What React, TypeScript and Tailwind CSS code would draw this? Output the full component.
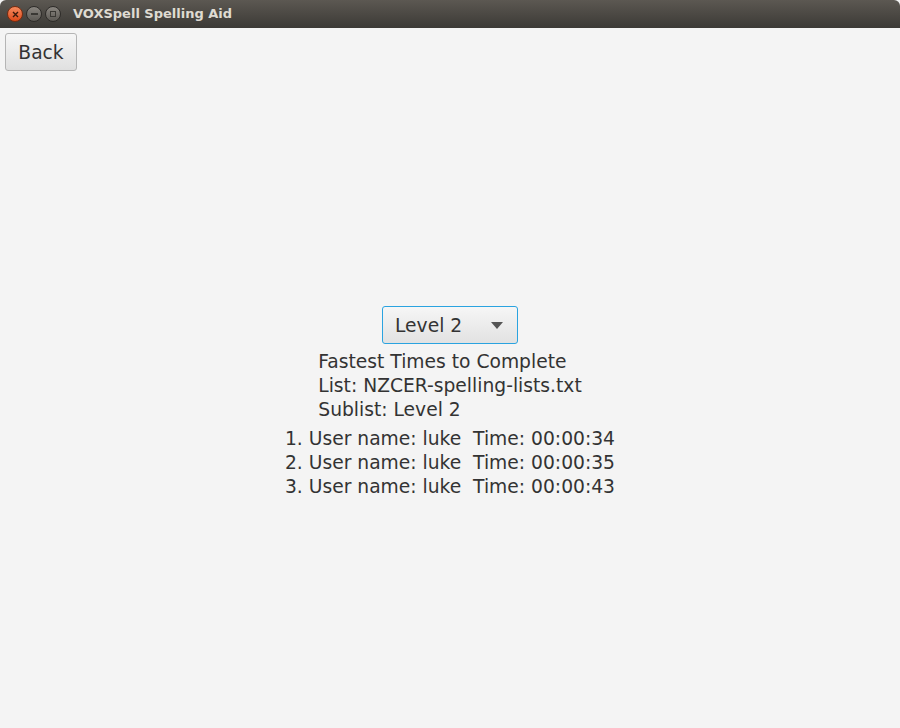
import React from "react";

export default function App() {
  const font = { fontFamily: '"DejaVu Sans", sans-serif' };
  return (
    <div className="w-[900px] h-[728px] bg-[#f4f4f4] flex flex-col overflow-hidden" style={font}>
      <div className="h-[28px] shrink-0 flex items-center bg-gradient-to-b from-[#5c5852] to-[#3c3a36] rounded-t-[6px]">
        <div className="flex items-center gap-[3px] pl-[7px]">
          <div className="w-[16px] h-[16px] rounded-full bg-gradient-to-b from-[#f58a5d] to-[#dd4814] border border-[#7a2c10] flex items-center justify-center">
            <svg width="7" height="7" viewBox="0 0 7 7"><path d="M1 1L6 6M6 1L1 6" stroke="#3a1a0c" strokeWidth="1.4" /></svg>
          </div>
          <div className="w-[16px] h-[16px] rounded-full bg-gradient-to-b from-[#8a8680] to-[#5c5954] border border-[#2e2c29] flex items-center justify-center">
            <div className="w-[7px] h-[1.5px] bg-[#3a3834]" />
          </div>
          <div className="w-[16px] h-[16px] rounded-full bg-gradient-to-b from-[#8a8680] to-[#5c5954] border border-[#2e2c29] flex items-center justify-center">
            <div className="w-[6px] h-[6px] border border-[#3a3834]" />
          </div>
        </div>
        <div className="ml-[12px] text-[13px] font-bold text-[#dfdbd2]" style={{ fontFamily: '"DejaVu Sans", sans-serif' }}>
          VOXSpell Spelling Aid
        </div>
      </div>
      <div className="relative flex-1 flex flex-col">
        <div className="pl-[5px] pt-[5px]">
          <button className="w-[72px] h-[38px] rounded-[3px] border border-[#b5b5b5] bg-gradient-to-b from-[#f6f6f6] to-[#e0e0e0] text-[18.7px] text-[#333] flex items-center justify-center pt-[2px]">
            Back
          </button>
        </div>
        <div className="flex flex-col items-center mt-[235px]">
          <div className="w-[136px] h-[38px] rounded-[3px] border border-[#2aa3e0] bg-gradient-to-b from-[#f6f6f6] to-[#e2e2e2] flex items-center pl-[12px] pr-[14px] text-[18.7px] text-[#333]">
            <span className="flex-1 pt-[2px]">Level 2</span>
            <svg width="12" height="7" viewBox="0 0 12 7"><path d="M0 0H12L6 7Z" fill="#555" /></svg>
          </div>
          <div className="mt-[6px] text-[18.7px] leading-[24px] text-[#333]">
            <div>Fastest Times to Complete</div>
            <div>List: NZCER-spelling-lists.txt</div>
            <div>Sublist: Level 2</div>
          </div>
          <div className="mt-[5px] text-[18.7px] leading-[24px] text-[#333] whitespace-pre">
            <div>1. User name: luke  Time: 00:00:34</div>
            <div>2. User name: luke  Time: 00:00:35</div>
            <div>3. User name: luke  Time: 00:00:43</div>
          </div>
        </div>
      </div>
    </div>
  );
}
